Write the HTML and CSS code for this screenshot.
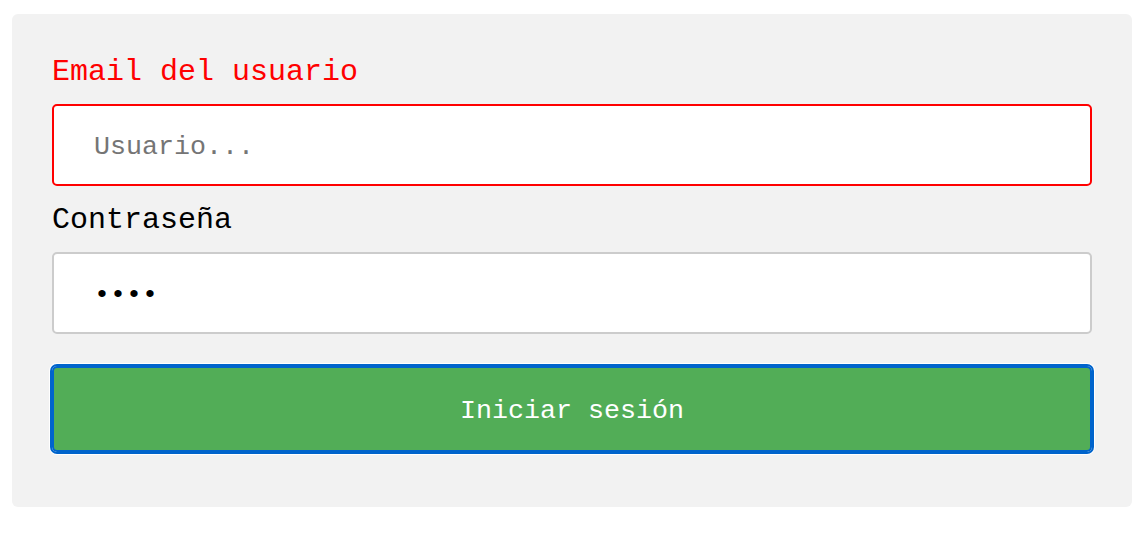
FILE: index.html
```html
<!DOCTYPE html>
<html lang="es">
<head>
<meta charset="utf-8">
<title>Login</title>
<link rel="stylesheet" href="styles.css">
</head>
<body>
<div class="page">
  <form class="card">
    <label class="label label-error" for="user">Email del usuario</label>
    <input class="field field-error" id="user" type="text" placeholder="Usuario...">
    <label class="label" for="pass">Contraseña</label>
    <input class="field" id="pass" type="password" value="1234">
    <button class="submit" type="button">Iniciar sesión</button>
  </form>
</div>
</body>
</html>
```

FILE: styles.css
```css
html, body {
  margin: 0;
  padding: 0;
  background: #ffffff;
}

.page {
  padding: 14px 12px;
}

.card {
  display: flex;
  flex-direction: column;
  background: #f2f2f2;
  border-radius: 6px;
  padding: 40px;
  height: 493px;
  box-sizing: border-box;
  font-family: "Courier New", "Nimbus Mono PS", "FreeMono", "Liberation Mono", monospace;
}

.label {
  display: block;
  font-size: 30px;
  line-height: 34px;
  color: #000000;
  padding-top: 1px;
  margin: 0 0 15px 0;
}

.label-error {
  color: #ff0000;
}

.field {
  box-sizing: border-box;
  width: 100%;
  height: 82px;
  margin: 0 0 16px 0;
  padding: 3px 40px 0 40px;
  border: 2px solid #cccccc;
  border-radius: 5px;
  background: #ffffff;
  font-family: "Courier New", "Nimbus Mono PS", "FreeMono", "Liberation Mono", monospace;
  font-size: 26.67px;
  color: #000000;
  outline: none;
}

.field::placeholder {
  color: #757575;
}

.field-error {
  border-color: #ff0000;
}

.submit {
  box-sizing: border-box;
  width: 100%;
  height: 86px;
  margin-top: 16px;
  padding: 3px 0 0 0;
  border: 2px solid #0064cc;
  border-radius: 5px;
  background: #52ad57;
  color: #ffffff;
  font-family: "Courier New", "Nimbus Mono PS", "FreeMono", "Liberation Mono", monospace;
  font-size: 26.67px;
  outline: 2px solid #0064cc;
  outline-offset: 0;
  box-shadow: 0 0 0 3px #ffffff;
  cursor: pointer;
}
```
